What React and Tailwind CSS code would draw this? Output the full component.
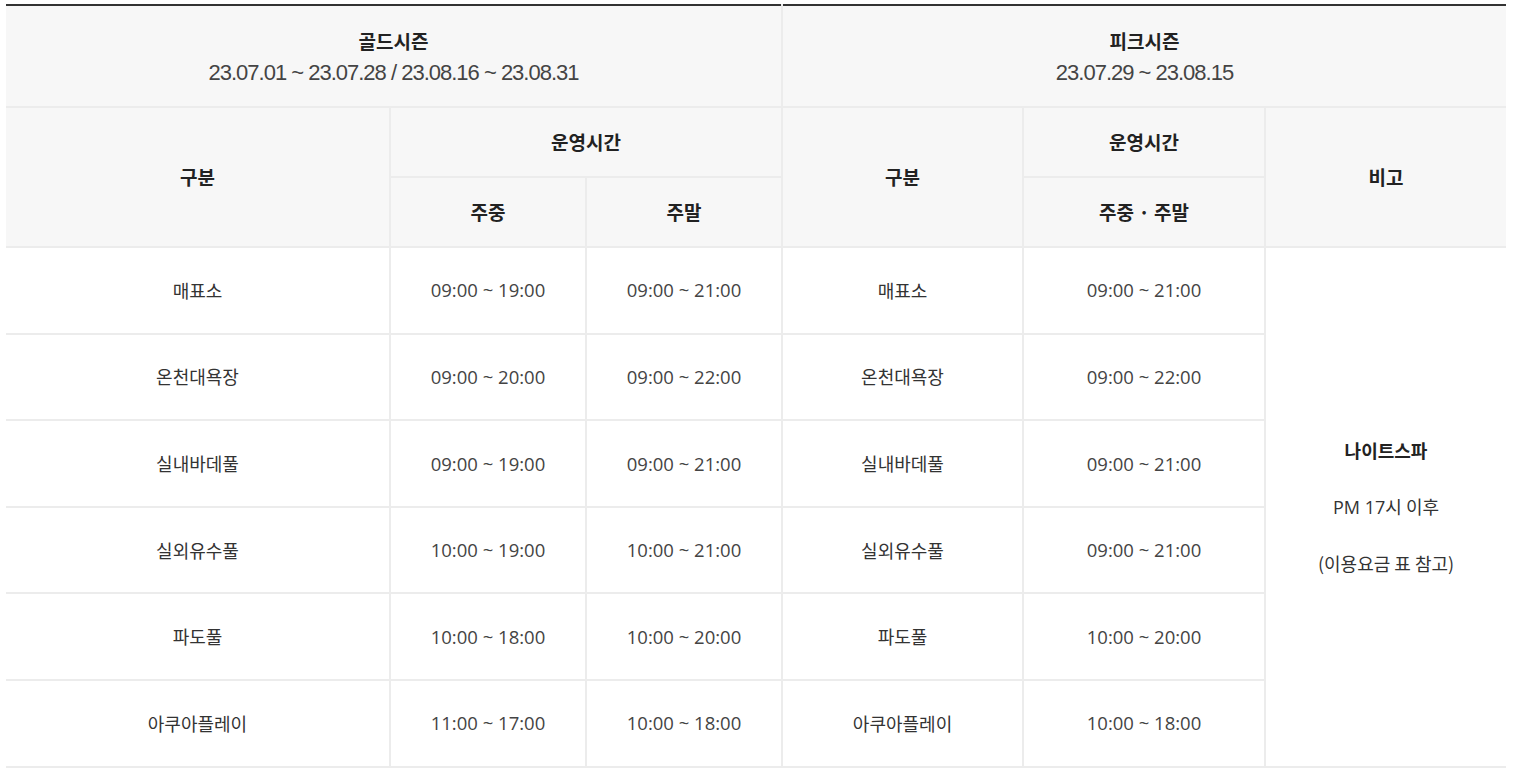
import React from "react";

const rows = [
  ["매표소", "09:00 ~ 19:00", "09:00 ~ 21:00", "매표소", "09:00 ~ 21:00"],
  ["온천대욕장", "09:00 ~ 20:00", "09:00 ~ 22:00", "온천대욕장", "09:00 ~ 22:00"],
  ["실내바데풀", "09:00 ~ 19:00", "09:00 ~ 21:00", "실내바데풀", "09:00 ~ 21:00"],
  ["실외유수풀", "10:00 ~ 19:00", "10:00 ~ 21:00", "실외유수풀", "09:00 ~ 21:00"],
  ["파도풀", "10:00 ~ 18:00", "10:00 ~ 20:00", "파도풀", "10:00 ~ 20:00"],
  ["아쿠아플레이", "11:00 ~ 17:00", "10:00 ~ 18:00", "아쿠아플레이", "10:00 ~ 18:00"],
];

const kr = { fontFamily: '"Noto Sans CJK KR", "Noto Sans", sans-serif' };
const num = { fontFamily: '"Open Sans", "Noto Sans CJK KR", sans-serif' };
const date = { fontFamily: '"Liberation Sans", sans-serif', fontSize: "22px" };

export default function App() {
  const th = "border-[2px] border-[#ececec] bg-[#f7f7f7] text-center align-middle text-[19px] font-bold text-[#222]";
  const td = "border-[2px] border-[#ececec] bg-white text-center align-middle text-[#333]";
  return (
    <div className="w-[1516px] h-[772px] bg-white pt-[4px] pl-[6px]" style={kr}>
      <table className="w-[1500px] table-fixed border-collapse border-t-[2px] border-t-[#333]">
        <colgroup>
          <col className="w-[384px]" />
          <col className="w-[196px]" />
          <col className="w-[196px]" />
          <col className="w-[241px]" />
          <col className="w-[242px]" />
          <col className="w-[241px]" />
        </colgroup>
        <thead>
          <tr className="h-[102px]">
            <th colSpan={3} className={th + " border-t-0 border-l-0 leading-[32px] pt-[2px]"}>
              <div>골드시즌</div>
              <div className="font-normal text-[#444] tracking-[-1px]" style={date}>
                23.07.01 ~ 23.07.28 / 23.08.16 ~ 23.08.31
              </div>
            </th>
            <th colSpan={3} className={th + " border-t-0 border-r-0 leading-[32px] pt-[2px]"}>
              <div>피크시즌</div>
              <div className="font-normal text-[#444] tracking-[-1px]" style={date}>
                23.07.29 ~ 23.08.15
              </div>
            </th>
          </tr>
          <tr className="h-[70px]">
            <th rowSpan={2} className={th + " border-l-0"}>구분</th>
            <th colSpan={2} className={th}>운영시간</th>
            <th rowSpan={2} className={th}>구분</th>
            <th className={th}>운영시간</th>
            <th rowSpan={2} className={th + " border-r-0"}>비고</th>
          </tr>
          <tr className="h-[70px]">
            <th className={th}>주중</th>
            <th className={th}>주말</th>
            <th className={th}>주중 · 주말</th>
          </tr>
        </thead>
        <tbody>
          {rows.map((r, i) => (
            <tr key={i} className="h-[86.6px]">
              <td className={td + " border-l-0 text-[18px] font-normal text-[#222]"}>{r[0]}</td>
              <td className={td + " text-[18.5px] text-[#444]"} style={num}>{r[1]}</td>
              <td className={td + " text-[18.5px] text-[#444]"} style={num}>{r[2]}</td>
              <td className={td + " text-[18px] font-normal text-[#222]"}>{r[3]}</td>
              <td className={td + " text-[18.5px] text-[#444]"} style={num}>{r[4]}</td>
              {i === 0 && (
                <td rowSpan={6} className={td + " border-r-0 text-[18px]"}>
                  <div className="flex flex-col items-center gap-[28px] leading-[28px]">
                    <div className="font-bold text-[#222]">나이트스파</div>
                    <div>
                      <span style={num}>PM 17</span>시 이후
                    </div>
                    <div>(이용요금 표 참고)</div>
                  </div>
                </td>
              )}
            </tr>
          ))}
        </tbody>
      </table>
    </div>
  );
}
